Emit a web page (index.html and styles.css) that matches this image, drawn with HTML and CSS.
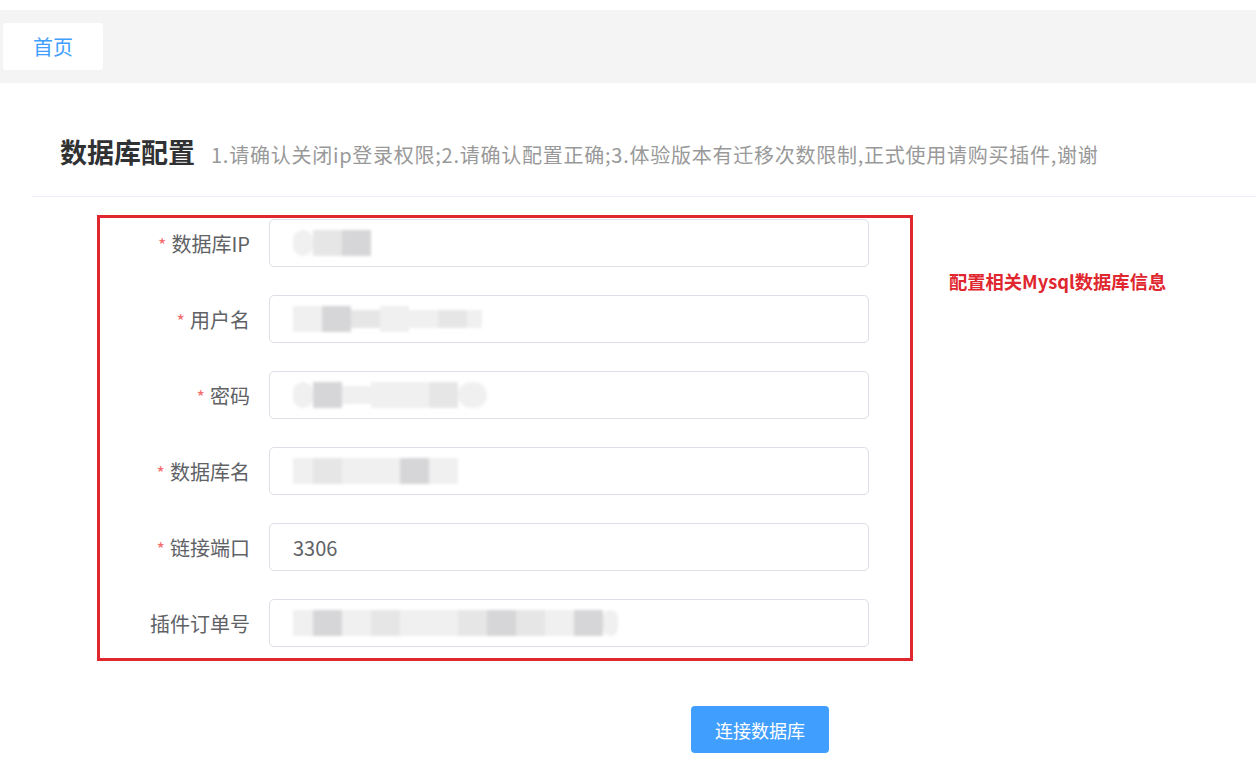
FILE: index.html
```html
<!DOCTYPE html>
<html lang="zh-CN">
<head>
<meta charset="utf-8">
<title>数据库配置</title>
<link rel="stylesheet" href="styles.css">
</head>
<body>
<div class="page">
  <div class="tabbar">
    <div class="tab">首页</div>
  </div>
  <div class="header">
    <h1 class="title">数据库配置</h1>
    <span class="subtitle">1.请确认关闭ip登录权限;2.请确认配置正确;3.体验版本有迁移次数限制,正式使用请购买插件,谢谢</span>
  </div>
  <div class="main">
    <div class="formbox">
      <div class="row">
        <label class="label"><span class="star">*</span>数据库IP</label>
        <div class="input">
          <div class="blur">
            <span class="blk w20 s1 round"></span><span class="blk w30 s2"></span><span class="blk w30 s3"></span>
          </div>
        </div>
      </div>
      <div class="row">
        <label class="label"><span class="star">*</span>用户名</label>
        <div class="input">
          <div class="blur">
            <span class="blk w30 s1"></span><span class="blk w30 s3"></span><span class="blk w30 s2 thin"></span><span class="blk w30 s1"></span><span class="blk w30 s1 thin"></span><span class="blk w30 s2 thin"></span><span class="blk w15 s1 thin"></span>
          </div>
        </div>
      </div>
      <div class="row">
        <label class="label"><span class="star">*</span>密码</label>
        <div class="input">
          <div class="blur">
            <span class="blk w20 s1 round"></span><span class="blk w30 s3"></span><span class="blk w30 s1 thin"></span><span class="blk w30 s1"></span><span class="blk w30 s1"></span><span class="blk w30 s2"></span><span class="blk w30 s1 round"></span>
          </div>
        </div>
      </div>
      <div class="row">
        <label class="label"><span class="star">*</span>数据库名</label>
        <div class="input">
          <div class="blur">
            <span class="blk w20 s1"></span><span class="blk w30 s2"></span><span class="blk w30 s1"></span><span class="blk w30 s1"></span><span class="blk w30 s3"></span><span class="blk w30 s1"></span>
          </div>
        </div>
      </div>
      <div class="row">
        <label class="label"><span class="star">*</span>链接端口</label>
        <div class="input"><span class="value">3306</span></div>
      </div>
      <div class="row">
        <label class="label">插件订单号</label>
        <div class="input">
          <div class="blur">
            <span class="blk w20 s1"></span><span class="blk w30 s3"></span><span class="blk w30 s1"></span><span class="blk w30 s2"></span><span class="blk w30 s1"></span><span class="blk w30 s1"></span><span class="blk w30 s2"></span><span class="blk w30 s3"></span><span class="blk w30 s2"></span><span class="blk w30 s1"></span><span class="blk w30 s3"></span><span class="blk w15 s1 round"></span>
          </div>
        </div>
      </div>
    </div>
    <div class="note">配置相关Mysql数据库信息</div>
  </div>
  <div class="actions">
    <button class="btn">连接数据库</button>
  </div>
</div>
</body>
</html>
```
FILE: styles.css
```css
* { box-sizing: border-box; }
html, body { margin: 0; padding: 0; background: #fff; }
body {
  font-family: "Noto Sans CJK SC", "Noto Sans", "Liberation Sans", sans-serif;
  color: #606266;
  width: 1256px;
  height: 774px;
  overflow: hidden;
}
.page { padding-top: 10px; }
.tabbar {
  background: #f4f4f5;
  height: 73px;
  padding: 13px 0 0 3px;
}
.tab {
  width: 100px;
  height: 47px;
  background: #fff;
  color: #409eff;
  font-size: 20px;
  line-height: 47px;
  text-align: center;
  border-radius: 3px;
}
.header {
  margin-left: 32px;
  padding: 51px 0 23px 28px;
  display: flex;
  align-items: baseline;
  border-bottom: 1px solid #ebeef5;
}
.title {
  margin: 0;
  font-size: 27px;
  font-weight: 700;
  color: #303133;
  line-height: 36px;
}
.subtitle {
  margin-left: 16px;
  font-size: 20px;
  letter-spacing: 0.75px;
  color: #999;
  line-height: 36px;
}
.main {
  display: flex;
  align-items: flex-start;
  margin-top: 18px;
  padding-left: 97px;
}
.formbox {
  width: 816px;
  height: 446px;
  border: 3px solid #e0262e;
  padding-top: 1px;
  display: flex;
  flex-direction: column;
  gap: 28px;
}
.row {
  display: flex;
  align-items: center;
  height: 48px;
}
.label {
  width: 169px;
  padding-right: 19px;
  text-align: right;
  font-size: 20px;
  color: #606266;
}
.star {
  color: #f56c6c;
  margin-right: 5px;
  font-size: 18px;
}
.input {
  width: 600px;
  height: 48px;
  border: 1px solid #dcdfe6;
  border-radius: 5px;
  display: flex;
  align-items: center;
  padding-left: 23px;
  overflow: hidden;
}
.value {
  font-size: 20px;
  color: #606266;
}
.blur {
  display: flex;
  align-items: center;
  filter: blur(1.5px);
}
.blk { display: inline-block; height: 26px; }
.blk.thin { height: 18px; }
.blk.round { border-radius: 13px; }
.w15 { width: 15px; }
.w20 { width: 20px; }
.w30 { width: 29px; }
.s1 { background: #f0f0f0; }
.s2 { background: #e6e6e6; }
.s3 { background: #d6d6d8; }
.note {
  margin-left: 36px;
  margin-top: 54px;
  font-size: 18.3px;
  font-weight: 700;
  color: #e0262e;
  line-height: 24px;
}
.actions {
  padding-left: 691px;
  margin-top: 45px;
}
.btn {
  width: 138px;
  height: 47px;
  border: none;
  border-radius: 4px;
  background: #409eff;
  color: #fff;
  font-family: "Noto Sans CJK SC", "Noto Sans", sans-serif;
  font-size: 18px;
  padding: 0;
}
```
